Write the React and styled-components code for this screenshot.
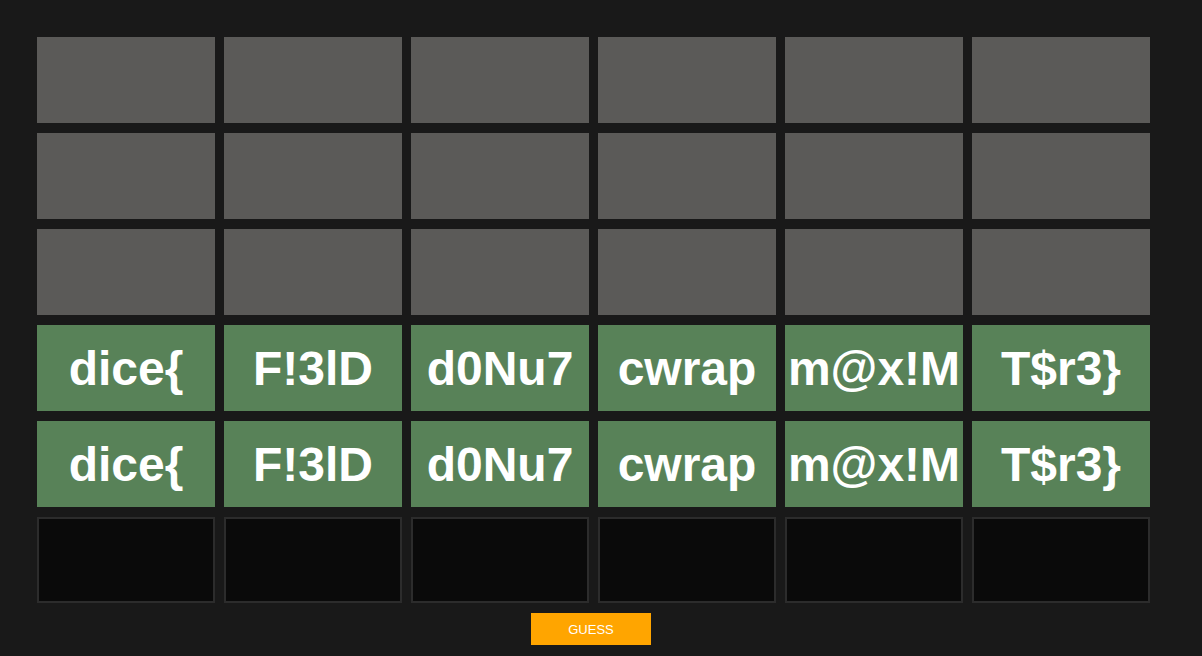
import styled, { createGlobalStyle } from "styled-components";

const GlobalStyle = createGlobalStyle`
  html, body {
    margin: 0;
    padding: 0;
    background: #191919;
    font-family: "Liberation Sans", Arial, sans-serif;
  }
`;

const Page = styled.div`
  display: flex;
  flex-direction: column;
  align-items: flex-start;
  padding: 37px 0 0 37px;
  width: 1113px;
  min-height: 619px;
`;

const Board = styled.div`
  display: grid;
  grid-template-columns: repeat(6, 178px);
  grid-auto-rows: 86px;
  column-gap: 9px;
  row-gap: 10px;
`;

const tileColors = {
  filled: "#5b5a58",
  correct: "#588258",
  empty: "#0a0a0a",
};

const Tile = styled.div`
  box-sizing: border-box;
  display: flex;
  align-items: center;
  justify-content: center;
  background: ${(p) => tileColors[p.$state]};
  border: ${(p) => (p.$state === "empty" ? "2px solid #2c2c2c" : "none")};
  color: #fff;
  font-weight: bold;
  font-size: 48px;
  white-space: nowrap;
`;

const Footer = styled.div`
  display: flex;
  justify-content: center;
  width: 1113px;
  margin-top: 10px;
  padding-right: 5px;
  box-sizing: border-box;
`;

const GuessButton = styled.button`
  width: 120px;
  height: 32px;
  border: none;
  background: #ffa500;
  color: #fff;
  font-family: "Liberation Sans", Arial, sans-serif;
  font-size: 13px;
  cursor: pointer;
`;

const words = ["dice{", "F!3lD", "d0Nu7", "cwrap", "m@x!M", "T$r3}"];

const rows = [
  { state: "filled", words: null },
  { state: "filled", words: null },
  { state: "filled", words: null },
  { state: "correct", words },
  { state: "correct", words },
  { state: "empty", words: null },
];

export default function App() {
  return (
    <>
      <GlobalStyle />
      <Page>
        <Board>
          {rows.map((row, r) =>
            Array.from({ length: 6 }).map((_, c) => (
              <Tile key={`${r}-${c}`} $state={row.state}>
                {row.words ? row.words[c] : ""}
              </Tile>
            ))
          )}
        </Board>
        <Footer>
          <GuessButton>GUESS</GuessButton>
        </Footer>
      </Page>
    </>
  );
}
